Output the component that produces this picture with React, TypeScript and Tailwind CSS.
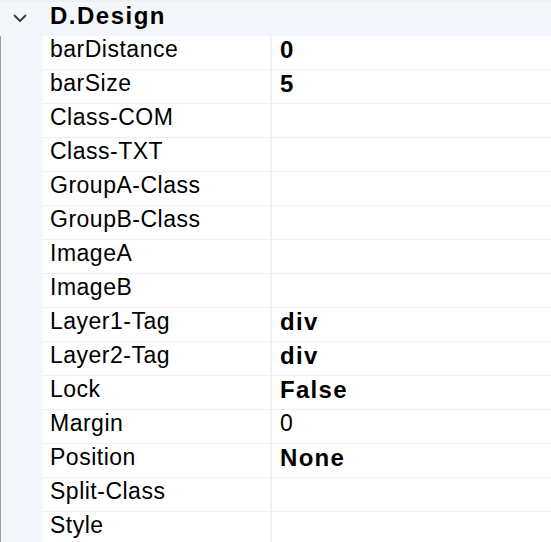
const rows: { name: string; value: string; bold?: boolean }[] = [
  { name: "barDistance", value: "0", bold: true },
  { name: "barSize", value: "5", bold: true },
  { name: "Class-COM", value: "" },
  { name: "Class-TXT", value: "" },
  { name: "GroupA-Class", value: "" },
  { name: "GroupB-Class", value: "" },
  { name: "ImageA", value: "" },
  { name: "ImageB", value: "" },
  { name: "Layer1-Tag", value: "div", bold: true },
  { name: "Layer2-Tag", value: "div", bold: true },
  { name: "Lock", value: "False", bold: true },
  { name: "Margin", value: "0" },
  { name: "Position", value: "None", bold: true },
  { name: "Split-Class", value: "" },
  { name: "Style", value: "" },
];

export default function App() {
  return (
    <div className="w-[551px] h-[542px] overflow-hidden bg-white font-['Liberation_Sans',sans-serif] text-black">
      <div className="h-[2px] bg-[#f0f0f0]" />
      <div className="flex h-[34px] items-center bg-[#f3f6fb]">
        <div className="flex w-[43px] pl-[12px] pb-[4px]">
          <svg width="16" height="10" viewBox="0 0 16 10">
            <path d="M2 3 L8 9 L14 3" fill="none" stroke="#404040" strokeWidth="2" />
          </svg>
        </div>
        <span className="pl-[7px] pb-[7px] text-[24px] font-bold tracking-[1.5px]">D.Design</span>
      </div>
      <div className="flex">
        <div className="w-[43px] shrink-0 border-l border-[#a0a0a0] bg-[#f3f6fb]" />
        <div className="flex-1">
          {rows.map((r) => (
            <div key={r.name} className="flex h-[34px] border-b border-[#eef2f8]">
              <div className="flex w-[229px] items-center border-r-2 border-[#eef2f8] pb-[6px] pl-[7px] text-[23px] tracking-[0.5px]">
                {r.name}
              </div>
              <div
                className={
                  r.bold
                    ? "flex flex-1 items-center pb-[6px] pl-[8px] text-[24px] font-bold tracking-[1.3px]"
                    : "flex flex-1 items-center pb-[6px] pl-[8px] text-[23px] tracking-[0.5px]"
                }
              >
                {r.value}
              </div>
            </div>
          ))}
        </div>
      </div>
    </div>
  );
}
